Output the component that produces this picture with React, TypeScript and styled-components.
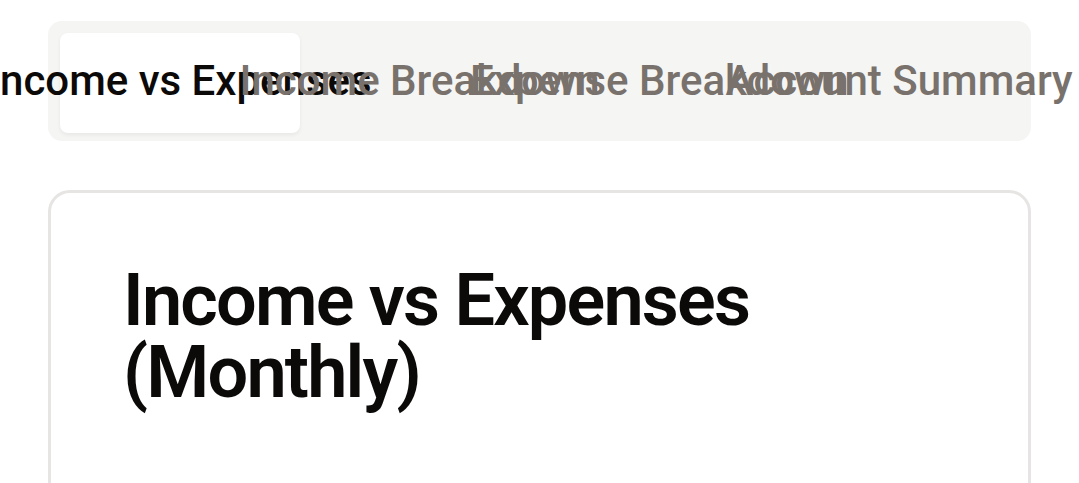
import React from "react";
import styled, { createGlobalStyle } from "styled-components";

const Global = createGlobalStyle`
  html, body {
    margin: 0;
    padding: 0;
    background: #ffffff;
    font-family: Roboto, "Noto Sans", "Liberation Sans", sans-serif;
    color: #0c0a09;
  }
  * { box-sizing: border-box; }
`;

const Page = styled.div`
  padding: 21px 48px 0;
  display: flex;
  flex-direction: column;
  gap: 49px;
  overflow: hidden;
  height: 483px;
`;

const TabList = styled.div`
  display: grid;
  grid-template-columns: repeat(4, 1fr);
  height: 120px;
  padding: 12px;
  background: #f5f5f4;
  border-radius: 14px;
`;

const Tab = styled.button<{ $active?: boolean }>`
  all: unset;
  display: flex;
  align-items: center;
  justify-content: center;
  white-space: nowrap;
  padding: 0 0 4px;
  min-width: 0;
  height: 96px;
  font-family: Roboto, "Noto Sans", "Liberation Sans", sans-serif;
  font-size: 42px;
  font-weight: 500;
  line-height: 60px;
  border-radius: 8px;
  color: ${(p) => (p.$active ? "#0c0a09" : "#78716c")};
  background: ${(p) => (p.$active ? "#ffffff" : "transparent")};
  box-shadow: ${(p) => (p.$active ? "0 2px 4px rgba(0,0,0,0.06)" : "none")};
`;

const Card = styled.div`
  border: 3px solid #e7e5e4;
  border-radius: 22px;
  padding: 72px;
  min-height: 400px;
  background: #ffffff;
`;

const Title = styled.h2`
  margin: 0;
  font-family: Roboto, "Noto Sans", "Liberation Sans", sans-serif;
  font-size: 72px;
  font-weight: 600;
  line-height: 1;
  letter-spacing: -1.8px;
  color: #0c0a09;
`;

const tabs = ["Income vs Expenses", "Income Breakdown", "Expense Breakdown", "Account Summary"];

export default function App() {
  return (
    <>
      <Global />
      <Page>
        <TabList>
          {tabs.map((t, i) => (
            <Tab key={t} $active={i === 0}>
              {t}
            </Tab>
          ))}
        </TabList>
        <Card>
          <Title>
            Income vs Expenses
            <br />
            (Monthly)
          </Title>
        </Card>
      </Page>
    </>
  );
}
